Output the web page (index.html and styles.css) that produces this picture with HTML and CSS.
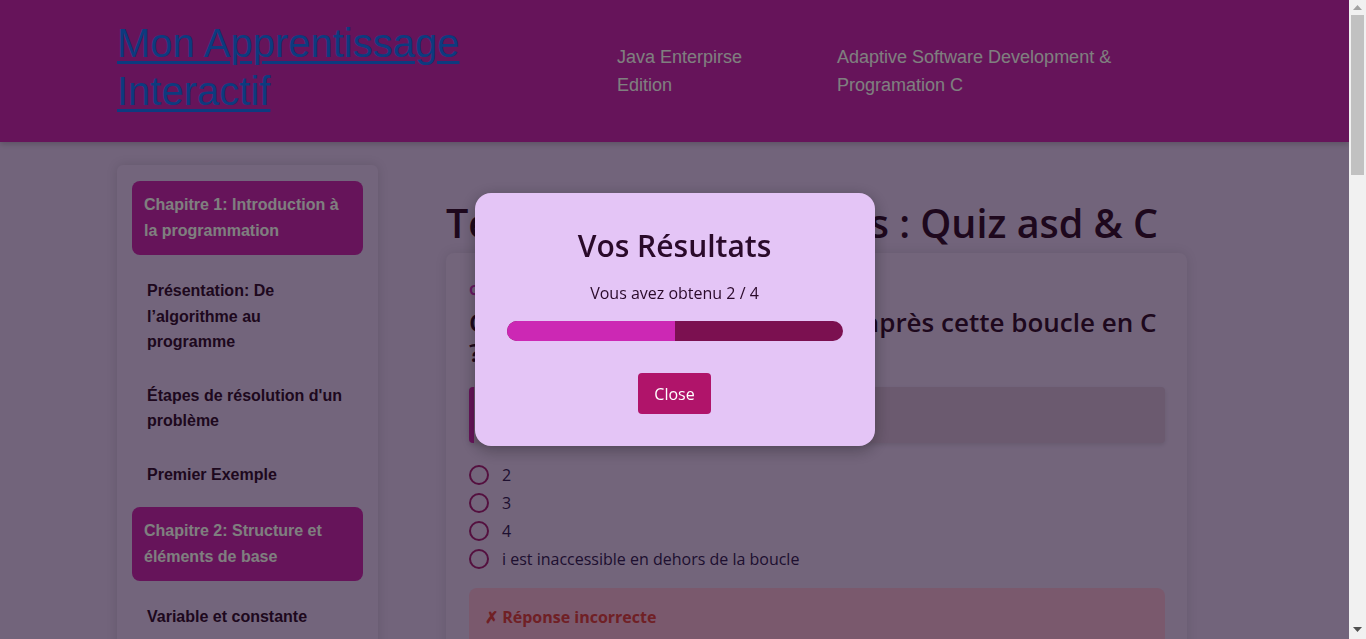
FILE: index.html
```html
<!DOCTYPE html>
<html lang="fr">
<head>
<meta charset="utf-8">
<title>Mon Apprentissage Interactif</title>
<link rel="stylesheet" href="styles.css">
</head>
<body>
<div class="page">
  <header class="site-header">
    <h1 class="brand"><a href="#">Mon Apprentissage Interactif</a></h1>
    <nav class="top-nav">
      <a class="nav-item nav-java" href="#">Java Enterpirse Edition</a>
      <a class="nav-item nav-asd" href="#">Adaptive Software Development &amp; Programation C</a>
    </nav>
  </header>

  <div class="layout">
    <aside class="sidebar">
      <div class="chapter">Chapitre 1: Introduction à la programmation</div>
      <ul class="lessons">
        <li>Présentation: De l’algorithme au programme</li>
        <li>Étapes de résolution d'un problème</li>
        <li>Premier Exemple</li>
      </ul>
      <div class="chapter">Chapitre 2: Structure et éléments de base</div>
      <ul class="lessons">
        <li>Variable et constante</li>
        <li>Types de données</li>
        <li>Opérateurs et expressions</li>
        <li>Entrées / Sorties</li>
      </ul>
      <div class="chapter">Chapitre 3: Structures conditionnelles</div>
      <ul class="lessons">
        <li>L'instruction si … sinon</li>
        <li>Conditions imbriquées</li>
        <li>L'instruction selon (switch)</li>
      </ul>
      <div class="chapter">Chapitre 4: Structures itératives</div>
      <ul class="lessons">
        <li>La boucle pour (for)</li>
        <li>La boucle tant que (while)</li>
        <li>La boucle répéter … jusqu'à</li>
      </ul>
      <div class="chapter">Chapitre 5: Tableaux et chaînes</div>
      <ul class="lessons">
        <li>Tableaux à une dimension</li>
        <li>Tableaux à deux dimensions</li>
        <li>Chaînes de caractères</li>
      </ul>
      <div class="chapter">Chapitre 6: Fonctions et procédures</div>
      <ul class="lessons">
        <li>Définition et appel</li>
        <li>Passage de paramètres</li>
        <li>Récursivité</li>
      </ul>
      <div class="chapter">Chapitre 7: Pointeurs et mémoire</div>
      <ul class="lessons">
        <li>Notion de pointeur</li>
        <li>Allocation dynamique</li>
        <li>Listes chaînées</li>
      </ul>
      <div class="chapter">Quiz</div>
      <ul class="lessons">
        <li>Quiz asd &amp; C</li>
      </ul>
    </aside>

    <main class="main">
      <h2 class="page-title">Tests de connaissances : Quiz asd &amp; C</h2>
      <section class="quiz-card">
        <div class="q-label">Question 3 / 4</div>
        <h3 class="q-text">Quelle est la valeur de l'entier i après cette boucle en C ?</h3>
        <pre class="code">for (int i = 0; i &lt; 3; i++) { }</pre>
        <ul class="options">
          <li><label><input type="radio" name="q"> <span>2</span></label></li>
          <li><label><input type="radio" name="q"> <span>3</span></label></li>
          <li><label><input type="radio" name="q"> <span>4</span></label></li>
          <li><label><input type="radio" name="q"> <span>i est inaccessible en dehors de la boucle</span></label></li>
        </ul>
        <div class="feedback">
          <p class="feedback-title">✗ Réponse incorrecte</p>
          <p class="feedback-text">La variable i est déclarée dans la boucle for : elle n'existe plus après la boucle.</p>
        </div>
      </section>
    </main>
  </div>
</div>

<div class="scrollbar" aria-hidden="true">
  <div class="sb-btn">
    <svg width="9" height="5" viewBox="0 0 9 5"><polygon points="0,5 9,5 4.5,0" fill="#a3a3a3"/></svg>
  </div>
  <div class="sb-thumb"></div>
  <div class="sb-track"></div>
  <div class="sb-btn sb-down">
    <svg width="9" height="5" viewBox="0 0 9 5"><polygon points="0,0 9,0 4.5,5" fill="#505050"/></svg>
  </div>
</div>

<div class="overlay">
  <div class="modal">
    <h2 class="modal-title">Vos Résultats</h2>
    <p class="modal-score">Vous avez obtenu 2 / 4</p>
    <div class="progress"><div class="progress-fill" style="width:50%"></div></div>
    <button class="close-btn" type="button">Close</button>
  </div>
</div>
</body>
</html>
```

FILE: styles.css
```css
html, body {
  margin: 0;
  padding: 0;
  height: 100%;
  overflow: hidden;
}

body {
  display: flex;
  background: #e4c8f6;
  font-family: "Open Sans", "Noto Sans", sans-serif;
  color: #3c143c;
}

.page {
  flex: 1;
  min-width: 0;
  height: 100%;
  overflow-y: auto;
  scrollbar-width: none;
}

.page::-webkit-scrollbar {
  display: none;
}

/* drawn window scrollbar */
.scrollbar {
  flex: none;
  width: 17px;
  height: 100%;
  background: #f1f1f1;
  display: flex;
  flex-direction: column;
}

.sb-btn {
  height: 15px;
  flex: none;
  display: flex;
  align-items: center;
  justify-content: center;
}

.sb-down {
  height: 17px;
  padding-bottom: 1px;
}

.sb-thumb {
  height: 160px;
  margin: 0 2px;
  background: #c1c1c1;
  flex: none;
}

.sb-track {
  flex: 1;
}

.site-header {
  height: 142px;
  background: #cc28b4;
  display: flex;
  align-items: center;
  padding-left: 117px;
  box-shadow: 0 2px 6px rgba(0, 0, 0, 0.2);
  box-sizing: border-box;
}

.brand {
  margin: 0 0 9px;
  width: 500px;
  font-family: "Liberation Sans", Arial, sans-serif;
  font-weight: normal;
  font-size: 40px;
  line-height: 48px;
}

.brand a {
  color: #1a76ff;
  text-decoration: underline;
  text-decoration-thickness: 3px;
  text-underline-offset: 4px;
}

.top-nav {
  display: flex;
  gap: 60px;
}

.nav-item {
  font-family: "Liberation Sans", Arial, sans-serif;
  font-size: 18px;
  line-height: 28px;
  color: #ffffff;
  text-decoration: none;
}

.nav-java { width: 160px; }
.nav-asd { width: 280px; }

.layout {
  display: flex;
  align-items: flex-start;
  gap: 68px;
  margin-left: 117px;
  width: 1070px;
  padding: 23px 0 40px;
}

.sidebar {
  width: 261px;
  flex: none;
  box-sizing: border-box;
  padding: 11px 15px 20px;
  background: #e6caf8;
  border-radius: 6px;
  box-shadow: 0 0 12px rgba(0, 0, 0, 0.12);
  font-family: "Liberation Sans", Arial, sans-serif;
  font-weight: bold;
  font-size: 16px;
  line-height: 25.6px;
}

.chapter {
  background: #cc28b4;
  color: #ffffff;
  border-radius: 8px;
  padding: 11px 12px;
  line-height: 26px;
  margin: 5px 0 9px;
}

.lessons {
  list-style: none;
  margin: 0;
  padding: 0;
}

.lessons li {
  padding: 14px 15px;
  color: #3c103c;
}

.main {
  flex: 1;
  min-width: 0;
}

.page-title {
  margin: 34px 0 6px;
  font-size: 39.5px;
  line-height: 48px;
  font-weight: 600;
  color: #3c103a;
  white-space: nowrap;
}

.quiz-card {
  background: #e6caf7;
  border-radius: 8px;
  padding: 27px 22px 20px 23px;
  box-shadow: 0 0 12px rgba(0, 0, 0, 0.1);
}

.q-label {
  font-size: 14px;
  line-height: 20px;
  font-weight: 700;
  color: #d030c8;
}

.q-text {
  margin: 7px 0 20px;
  font-size: 26px;
  line-height: 30px;
  font-weight: 600;
  color: #3c103a;
}

.code {
  margin: 0 0 18px;
  height: 56px;
  box-sizing: border-box;
  padding: 17px 18px;
  background: #d6b4de;
  border-left: 5px solid #cc28b4;
  border-radius: 4px;
  font-family: "Liberation Mono", monospace;
  font-size: 14px;
  line-height: 22px;
  color: #3c103a;
  box-shadow: 0 2px 4px rgba(0, 0, 0, 0.1);
}

.options {
  list-style: none;
  margin: 0 0 15px;
  padding: 0;
}

.options li {
  height: 28px;
  display: flex;
  align-items: center;
}

.options label {
  display: flex;
  align-items: center;
  font-size: 16px;
  color: #3c2060;
}

.options input {
  appearance: none;
  -webkit-appearance: none;
  width: 20px;
  height: 20px;
  margin: 0 13px 0 0;
  border: 2px solid #a8207e;
  border-radius: 50%;
  box-sizing: border-box;
  background: transparent;
}

.feedback {
  background: #f4b2da;
  border-radius: 8px;
  padding: 16px 16px;
}

.feedback-title {
  margin: 0 0 8px;
  font-weight: 700;
  font-size: 16px;
  line-height: 26px;
  color: #e0404a;
}

.feedback-text {
  margin: 0;
  font-size: 16px;
  line-height: 24px;
  color: #3c103a;
}

.overlay {
  position: fixed;
  top: 0;
  left: 0;
  bottom: 0;
  right: 17px;
  background: rgba(0, 0, 0, 0.5);
  display: flex;
  align-items: center;
  justify-content: center;
}

.modal {
  width: 400px;
  box-sizing: border-box;
  padding: 32px;
  background: #e4c5f6;
  border-radius: 16px;
  box-shadow: 0 4px 16px rgba(0, 0, 0, 0.3);
  text-align: center;
  color: #2a0a2a;
}

.modal-title {
  margin: 0 0 14px;
  font-size: 30px;
  line-height: 42px;
  font-weight: 600;
}

.modal-score {
  margin: 0 0 16px;
  font-size: 16px;
  line-height: 24px;
}

.progress {
  height: 20px;
  border-radius: 10px;
  background: #7b1050;
  overflow: hidden;
  margin-bottom: 32px;
}

.progress-fill {
  height: 100%;
  background: #cc28b4;
}

.close-btn {
  background: #b0146a;
  color: #ffffff;
  border: none;
  border-radius: 4px;
  padding: 0 16px;
  height: 41px;
  font-family: inherit;
  font-size: 16px;
}
```
